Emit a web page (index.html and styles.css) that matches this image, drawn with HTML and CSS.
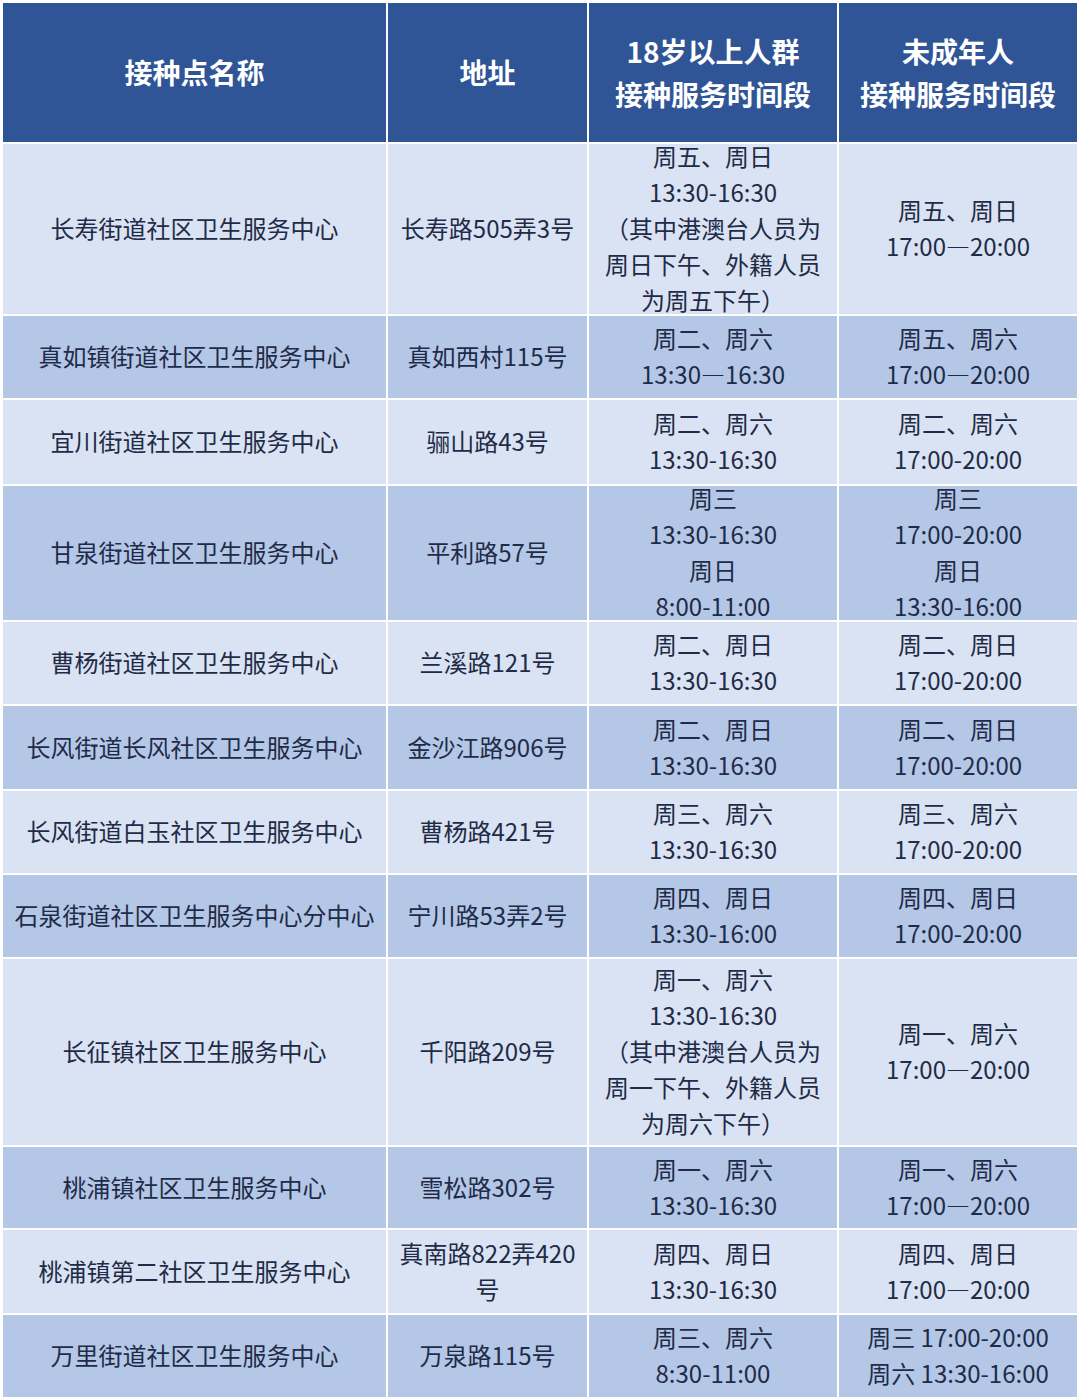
FILE: index.html
```html
<!DOCTYPE html>
<html lang="zh-CN">
<head>
<meta charset="utf-8">
<title>接种点</title>
<link rel="stylesheet" href="styles.css">
</head>
<body>
<div class="table">
  <div class="cell head">接种点名称</div>
  <div class="cell head">地址</div>
  <div class="cell head">18岁以上人群<br>接种服务时间段</div>
  <div class="cell head">未成年人<br>接种服务时间段</div>

  <div class="cell light">长寿街道社区卫生服务中心</div>
  <div class="cell light">长寿路505弄3号</div>
  <div class="cell light">周五、周日<br>13:30-16:30<br>（其中港澳台人员为<br>周日下午、外籍人员<br>为周五下午）</div>
  <div class="cell light">周五、周日<br>17:00—20:00</div>

  <div class="cell dark">真如镇街道社区卫生服务中心</div>
  <div class="cell dark">真如西村115号</div>
  <div class="cell dark">周二、周六<br>13:30—16:30</div>
  <div class="cell dark">周五、周六<br>17:00—20:00</div>

  <div class="cell light">宜川街道社区卫生服务中心</div>
  <div class="cell light">骊山路43号</div>
  <div class="cell light">周二、周六<br>13:30-16:30</div>
  <div class="cell light">周二、周六<br>17:00-20:00</div>

  <div class="cell dark">甘泉街道社区卫生服务中心</div>
  <div class="cell dark">平利路57号</div>
  <div class="cell dark">周三<br>13:30-16:30<br>周日<br>8:00-11:00</div>
  <div class="cell dark">周三<br>17:00-20:00<br>周日<br>13:30-16:00</div>

  <div class="cell light">曹杨街道社区卫生服务中心</div>
  <div class="cell light">兰溪路121号</div>
  <div class="cell light">周二、周日<br>13:30-16:30</div>
  <div class="cell light">周二、周日<br>17:00-20:00</div>

  <div class="cell dark">长风街道长风社区卫生服务中心</div>
  <div class="cell dark">金沙江路906号</div>
  <div class="cell dark">周二、周日<br>13:30-16:30</div>
  <div class="cell dark">周二、周日<br>17:00-20:00</div>

  <div class="cell light">长风街道白玉社区卫生服务中心</div>
  <div class="cell light">曹杨路421号</div>
  <div class="cell light">周三、周六<br>13:30-16:30</div>
  <div class="cell light">周三、周六<br>17:00-20:00</div>

  <div class="cell dark">石泉街道社区卫生服务中心分中心</div>
  <div class="cell dark">宁川路53弄2号</div>
  <div class="cell dark">周四、周日<br>13:30-16:00</div>
  <div class="cell dark">周四、周日<br>17:00-20:00</div>

  <div class="cell light">长征镇社区卫生服务中心</div>
  <div class="cell light">千阳路209号</div>
  <div class="cell light">周一、周六<br>13:30-16:30<br>（其中港澳台人员为<br>周一下午、外籍人员<br>为周六下午）</div>
  <div class="cell light">周一、周六<br>17:00—20:00</div>

  <div class="cell dark">桃浦镇社区卫生服务中心</div>
  <div class="cell dark">雪松路302号</div>
  <div class="cell dark">周一、周六<br>13:30-16:30</div>
  <div class="cell dark">周一、周六<br>17:00—20:00</div>

  <div class="cell light">桃浦镇第二社区卫生服务中心</div>
  <div class="cell light">真南路822弄420<br>号</div>
  <div class="cell light">周四、周日<br>13:30-16:30</div>
  <div class="cell light">周四、周日<br>17:00—20:00</div>

  <div class="cell dark">万里街道社区卫生服务中心</div>
  <div class="cell dark">万泉路115号</div>
  <div class="cell dark">周三、周六<br>8:30-11:00</div>
  <div class="cell dark">周三 17:00-20:00<br>周六 13:30-16:00</div>
</div>
</body>
</html>
```

FILE: styles.css
```css
html, body {
  margin: 0;
  padding: 0;
  background: #ffffff;
}

.table {
  display: grid;
  grid-template-columns: 383px 199px 248px 238px;
  grid-template-rows: 139px 170px 82px 84px 134px 82px 83px 82px 82px 186px 81px 83px 82px;
  gap: 2px;
  margin: 3px 0 0 3px;
  width: 1074px;
  font-family: "Noto Sans CJK SC", "Noto Sans", sans-serif;
}

.cell {
  display: flex;
  align-items: center;
  justify-content: center;
  text-align: center;
  overflow: hidden;
  font-size: 24px;
  line-height: 36px;
  color: #1f2b47;
  white-space: nowrap;
  padding-bottom: 2px;
}

.head {
  background: #2f5597;
  color: #ffffff;
  font-weight: 700;
  font-size: 28px;
  line-height: 43px;
  padding-bottom: 0;
}

.light {
  background: #dae3f3;
}

.dark {
  background: #b4c7e7;
}
```
